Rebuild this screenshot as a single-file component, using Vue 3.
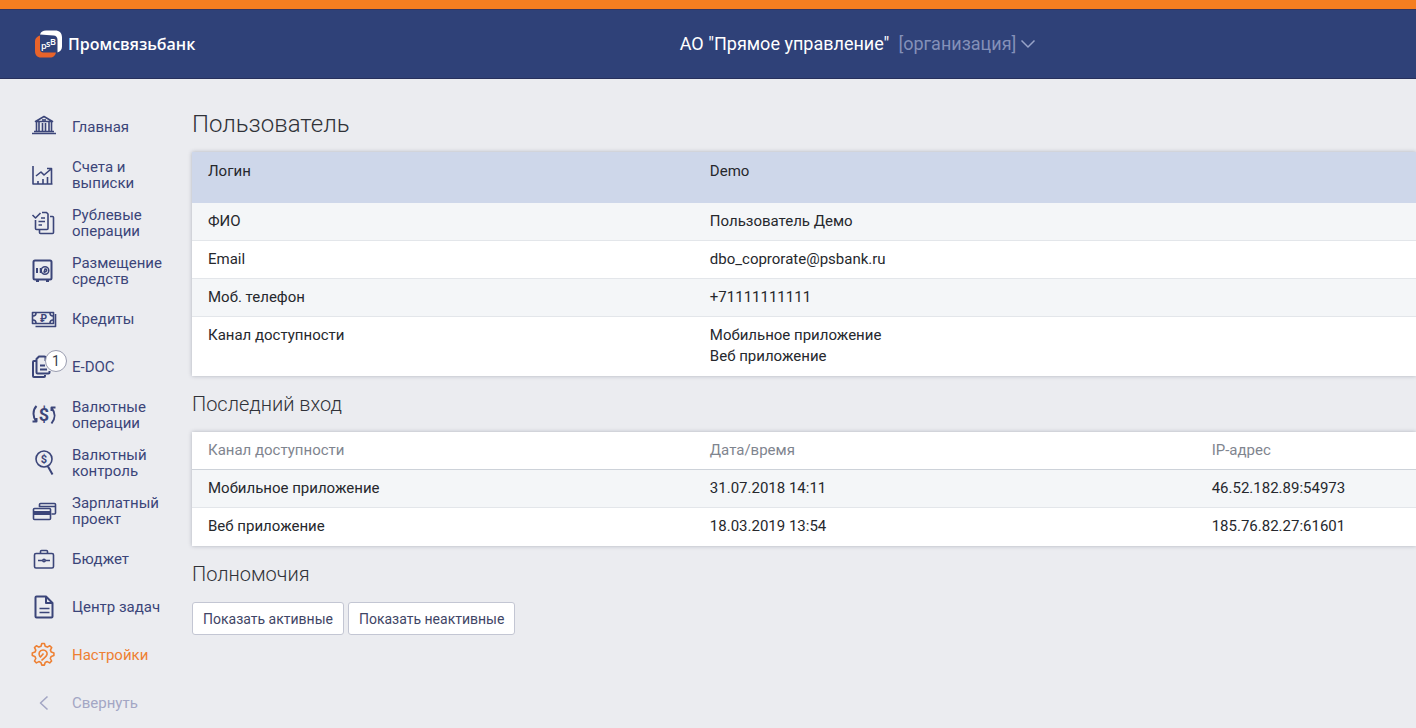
<script setup>
import { ref } from 'vue'

const navItems = [
  { icon: 'home', label: 'Главная' },
  { icon: 'chart', label: 'Счета и выписки' },
  { icon: 'docs', label: 'Рублевые операции' },
  { icon: 'safe', label: 'Размещение средств' },
  { icon: 'cash', label: 'Кредиты' },
  { icon: 'edoc', label: 'E-DOC', badge: 1 },
  { icon: 'exchange', label: 'Валютные операции' },
  { icon: 'search', label: 'Валютный контроль' },
  { icon: 'cards', label: 'Зарплатный проект' },
  { icon: 'case', label: 'Бюджет' },
  { icon: 'file', label: 'Центр задач' },
  { icon: 'gear', label: 'Настройки', active: true },
]

const profile = ref([
  { label: 'Логин', values: ['Demo'] },
  { label: 'ФИО', values: ['Пользователь Демо'] },
  { label: 'Email', values: ['dbo_coprorate@psbank.ru'] },
  { label: 'Моб. телефон', values: ['+71111111111'] },
  { label: 'Канал доступности', values: ['Мобильное приложение', 'Веб приложение'] },
])

const logins = ref([
  { channel: 'Мобильное приложение', date: '31.07.2018 14:11', ip: '46.52.182.89:54973' },
  { channel: 'Веб приложение', date: '18.03.2019 13:54', ip: '185.76.82.27:61601' },
])
</script>

<template>
  <div class="page">
    <header class="header">
      <a href="#" class="brand">
        <svg class="brand-mark" viewBox="0 -1 30 30" aria-hidden="true">
          <path d="M6 5.500C2 7 1 9 1 12v9c0 4 2 6.500 6 6.500h9c3.500 0 5-1.500 6-5H10c-3 0-4-1-4-4z" fill="#e8632a" />
          <path d="M6 4.500C7 1.500 9 .5 12 .5h9c4.500 0 7 2.500 7 7v9c0 3-1.500 5-4.500 6V10c0-3-1.500-4.500-4-4.500z" fill="#fff" />
          <text class="mark-text">
            <tspan x="7" y="19">p</tspan><tspan x="12" y="17">s</tspan><tspan x="16" y="15">B</tspan>
          </text>
        </svg>
        <span class="brand-name">Промсвязьбанк</span>
      </a>
      <button type="button" class="org">
        <span>АО "Прямое управление"</span>
        <span class="org-type">[организация]</span>
        <svg class="org-arrow" viewBox="0 0 16 10" aria-hidden="true"><path d="M1.500 1.500 8 8l6.500-6.500" /></svg>
      </button>
    </header>

    <div class="body">
      <nav class="sidebar">
        <a v-for="item in navItems" :key="item.icon" href="#" class="nav-item" :class="{ active: item.active }">
          <span class="icon-wrap">
            <svg class="icon" viewBox="0 0 32 32" aria-hidden="true">
              <g v-if="item.icon === 'home'">
                <path d="M7.500 10.500 16 5.500l8.500 5zM4 22.500h24M6 20.500h20M8.500 11v9M11 11v9M14.500 12v8M17.500 12v8M21 11v9M23.500 11v9" />
                <path d="M14 9h4" />
              </g>
              <g v-else-if="item.icon === 'chart'">
                <path d="M5 7v18h19.500M10 25v-3M15 25v-5M19.500 25v-7M23.500 25V14M8 17l5-4 3 3 6.500-5.500M19 9.500h4.500V14" />
              </g>
              <g v-else-if="item.icon === 'docs'">
                <path d="m4.500 8 3 3 5-5M14 5.500h4.500l1.500 1.500v14.500a1 1 0 0 1-1 1H8.500a1 1 0 0 1-1-1V13M13 11h4M10.500 14.500H17M10.500 18H14M22 9.500h2.500a1 1 0 0 1 1 1v15a1 1 0 0 1-1 1h-12a1 1 0 0 1-1-1V23" />
              </g>
              <g v-else-if="item.icon === 'safe'" class="bold">
                <rect x="5.500" y="5.500" width="18" height="19" rx="1.500" />
                <path d="M8 26h3M18 26h3M9 13v5" />
                <path class="thin" d="M12.500 13v5m3-.500 2.500-1c1.500-1 .5-3-1-2.500l-1 3.500" />
                <circle class="thin" cx="17" cy="15.500" r="3.800" />
              </g>
              <g v-else-if="item.icon === 'cash'">
                <rect x="4.500" y="9.500" width="21" height="11" />
                <path d="M7.500 23.500h20V11M5 13c2 0 3-1 3-3M5 17c2 0 3 1 3 3M25 13c-2 0-3-1-3-3M25 17c-2 0-3 1-3 3" />
                <text x="12" y="19" class="glyph rouble">₽</text>
              </g>
              <g v-else-if="item.icon === 'edoc'" class="bold">
                <path d="M8 10H6a1 1 0 0 0-1 1v14a1 1 0 0 0 1 1h10a1 1 0 0 0 1-1v-1M17.500 10V6.500a1 1 0 0 0-1-1H11L8.500 8v13.500a1 1 0 0 0 1 1h11a1 1 0 0 0 1-1V20M12 14.500h5M12 18.500h7" />
              </g>
              <g v-else-if="item.icon === 'exchange'" class="bold">
                <path d="M8.500 7c-4 4-4 11 0 16M4.500 22.500h4V19M23.500 24.500c4-5 4-11 0-15.500M27.500 8.500h-4V12" />
                <text x="16" y="22" class="glyph dollar">$</text>
              </g>
              <g v-else-if="item.icon === 'search'">
                <circle cx="16" cy="12" r="8" />
                <path class="heavy" d="m20 19.500 4.500 8" />
                <text x="16" y="16" class="glyph dollar-small">$</text>
              </g>
              <g v-else-if="item.icon === 'cards'">
                <path d="M11.500 12V9.500a1 1 0 0 1 1-1h14a1 1 0 0 1 1 1V18a1 1 0 0 1-1 1h-3M11 11.500h16" />
                <rect x="5.500" y="13.500" width="17" height="11" rx="1" />
                <path class="solid" d="M5 16h18v4H5z" />
              </g>
              <g v-else-if="item.icon === 'case'">
                <rect x="6.500" y="10.500" width="19" height="14.500" rx="1.500" />
                <path d="M12.500 10V8.500a1 1 0 0 1 1-1h5a1 1 0 0 1 1 1V10M10 17.500h4.500M17.500 17.500H22" />
                <circle cx="16" cy="17.500" r="1.200" />
              </g>
              <g v-else-if="item.icon === 'file'" class="bold">
                <path d="M18 5.500H8.500a1 1 0 0 0-1 1v19a1 1 0 0 0 1 1h15a1 1 0 0 0 1-1V12zM18 5.500V12h6.500" />
                <path class="thin" d="M11.500 17.500h10M11.500 21.500h10" />
              </g>
              <g v-else transform="translate(0 -1)">
                <path d="M13.800 5.500h2.600l.8 2.700 2.100.9 2.500-1.400 1.900 1.900-1.300 2.500.9 2 2.600.9v2.600l-2.700.8-.9 2.100 1.300 2.500-1.900 1.900-2.500-1.300-2 .9-.8 2.600h-2.600l-.9-2.700-2-.8-2.500 1.300-1.900-1.900 1.300-2.500-.9-2.100-2.600-.8V15l2.700-.9.8-2-1.300-2.500 1.900-1.900 2.500 1.400 2.100-.9z" />
                <path d="M11.800 18.500c-1.800-3-.3-6.500 3.200-6.500 3 0 4.500 2.200 4 4.500-.5 2.500-3 3-5.500 6M15.500 15.500 12 19.500" />
              </g>
            </svg>
            <span v-if="item.badge" class="badge">{{ item.badge }}</span>
          </span>
          <span class="nav-label">{{ item.label }}</span>
        </a>
        <button type="button" class="nav-item collapse">
          <svg class="icon" viewBox="0 0 32 32" aria-hidden="true"><path d="m19.500 9.500-7 6.500 7 6.500" /></svg>
          <span class="nav-label">Свернуть</span>
        </button>
      </nav>

      <main class="content">
        <h1>Пользователь</h1>
        <table class="panel profile">
          <colgroup><col class="col-main" /><col /></colgroup>
          <tbody>
            <tr v-for="row in profile" :key="row.label">
              <th scope="row">{{ row.label }}</th>
              <td><div v-for="value in row.values" :key="value">{{ value }}</div></td>
            </tr>
          </tbody>
        </table>

        <h2>Последний вход</h2>
        <table class="panel logins">
          <colgroup><col class="col-main" /><col class="col-main" /><col /></colgroup>
          <thead>
            <tr>
              <th scope="col">Канал доступности</th>
              <th scope="col">Дата/время</th>
              <th scope="col">IP-адрес</th>
            </tr>
          </thead>
          <tbody>
            <tr v-for="login in logins" :key="login.channel">
              <td>{{ login.channel }}</td>
              <td>{{ login.date }}</td>
              <td>{{ login.ip }}</td>
            </tr>
          </tbody>
        </table>

        <h2>Полномочия</h2>
        <div class="actions">
          <button type="button">Показать активные</button>
          <button type="button">Показать неактивные</button>
        </div>
      </main>
    </div>
  </div>
</template>

<style>
body {
  background: #ebecf0;
}
</style>

<style scoped>
.page {
  font-family: Roboto, "Liberation Sans", sans-serif;
  font-size: 15px;
  color: #26282d;
  overflow-x: hidden;
}

button {
  font: inherit;
  cursor: pointer;
}

.header {
  display: grid;
  grid-template-columns: 48% auto;
  align-items: center;
  justify-content: start;
  height: 70px;
  box-sizing: content-box;
  border-top: 9px solid #f57e20;
  background: #2f4178;
  box-shadow: inset 0 1px #33345c, inset 0 -1px #27305c;
}

.brand {
  display: flex;
  align-items: center;
  gap: 4px;
  padding-left: 34px;
  color: #fff;
  text-decoration: none;
}

.brand-mark {
  width: 30px;
  height: 30px;
}

.mark-text {
  font: 600 9px "Open Sans", sans-serif;
  fill: #fff;
}

.brand-name {
  font: 600 16px/24px "Open Sans", sans-serif;
}

.org {
  display: flex;
  align-items: center;
  padding: 0;
  border: 0;
  background: none;
  color: #fff;
  font-size: 18px;
  line-height: 24px;
  white-space: nowrap;
}

.org-type {
  margin-left: 9px;
  color: #8490b8;
}

.org-arrow {
  width: 16px;
  height: 10px;
  margin-left: 4px;
  fill: none;
  stroke: #98a3c8;
  stroke-width: 1.5;
}

.body {
  display: flex;
}

.sidebar {
  display: flex;
  flex: 0 0 192px;
  flex-direction: column;
  padding-top: 24px;
}

.nav-item {
  display: flex;
  align-items: center;
  gap: 12px;
  height: 48px;
  padding: 0 20px 0 28px;
  border: 0;
  background: none;
  color: #3b4579;
  line-height: 16px;
  text-align: left;
  text-decoration: none;
}

.nav-item.active {
  color: #ee8033;
}

.nav-item.collapse {
  color: #a3a6c4;
}

.icon-wrap {
  position: relative;
  display: flex;
}

.icon {
  flex: none;
  width: 32px;
  height: 32px;
  fill: none;
  stroke: currentColor;
  stroke-width: 1.6;
  stroke-linejoin: round;
}

.bold,
.heavy {
  stroke-width: 2;
}

.thin {
  stroke-width: 1.5;
}

.solid {
  fill: currentColor;
  stroke: none;
}

.glyph {
  fill: currentColor;
  stroke: none;
  font-family: Roboto, "DejaVu Sans", sans-serif;
  font-weight: 700;
}

.rouble {
  font-size: 10px;
}

.dollar {
  font-size: 18px;
  text-anchor: middle;
}

.dollar-small {
  font-size: 11px;
  text-anchor: middle;
}

.badge {
  position: absolute;
  top: -1px;
  left: 17px;
  width: 20px;
  height: 20px;
  border: 1px solid #9a9db0;
  border-radius: 50%;
  background: #fff;
  color: #3c3f4c;
  font-size: 14px;
  line-height: 20px;
  text-align: center;
}

.content {
  flex: 1;
  min-width: 0;
}

h1,
h2 {
  margin: 0;
  color: #303238;
  font-weight: 300;
}

h1 {
  padding: 29px 0 12px;
  font-size: 24px;
  line-height: 32px;
}

h2 {
  padding: 16px 0;
  font-size: 20px;
  line-height: 24px;
}

.panel {
  width: 100%;
  table-layout: fixed;
  border-collapse: separate;
  border-spacing: 0;
  background: #fff;
  box-shadow: 0 0 4px rgba(40, 45, 70, 0.3);
}

.col-main {
  width: 41%;
}

th,
td {
  padding: 8px 16px;
  border-bottom: 1px solid #e3e6ea;
  font-weight: 400;
  line-height: 21px;
  text-align: left;
  vertical-align: top;
}

tbody tr:last-child > * {
  border-bottom: 0;
}

.profile tr:nth-child(even),
.logins tbody tr:nth-child(odd) {
  background: #f4f6f8;
}

.profile tr:first-child {
  background: #ced7ea;
}

.profile tr:first-child > * {
  padding-top: 9px;
  padding-bottom: 20px;
  border-bottom-color: #ced7ea;
}

.profile tr:last-child > * {
  padding-bottom: 9px;
}

.logins thead th {
  border-bottom-color: #cdd2d9;
  color: #7f858f;
}

.logins tbody tr:last-child > * {
  padding-bottom: 9px;
}

.actions {
  display: flex;
  gap: 4px;
}

.actions button {
  height: 33px;
  padding: 0 10px;
  border: 1px solid #c3c6d3;
  border-radius: 3px;
  background: #fff;
  color: #3f4566;
  font-size: 14px;
}
</style>
